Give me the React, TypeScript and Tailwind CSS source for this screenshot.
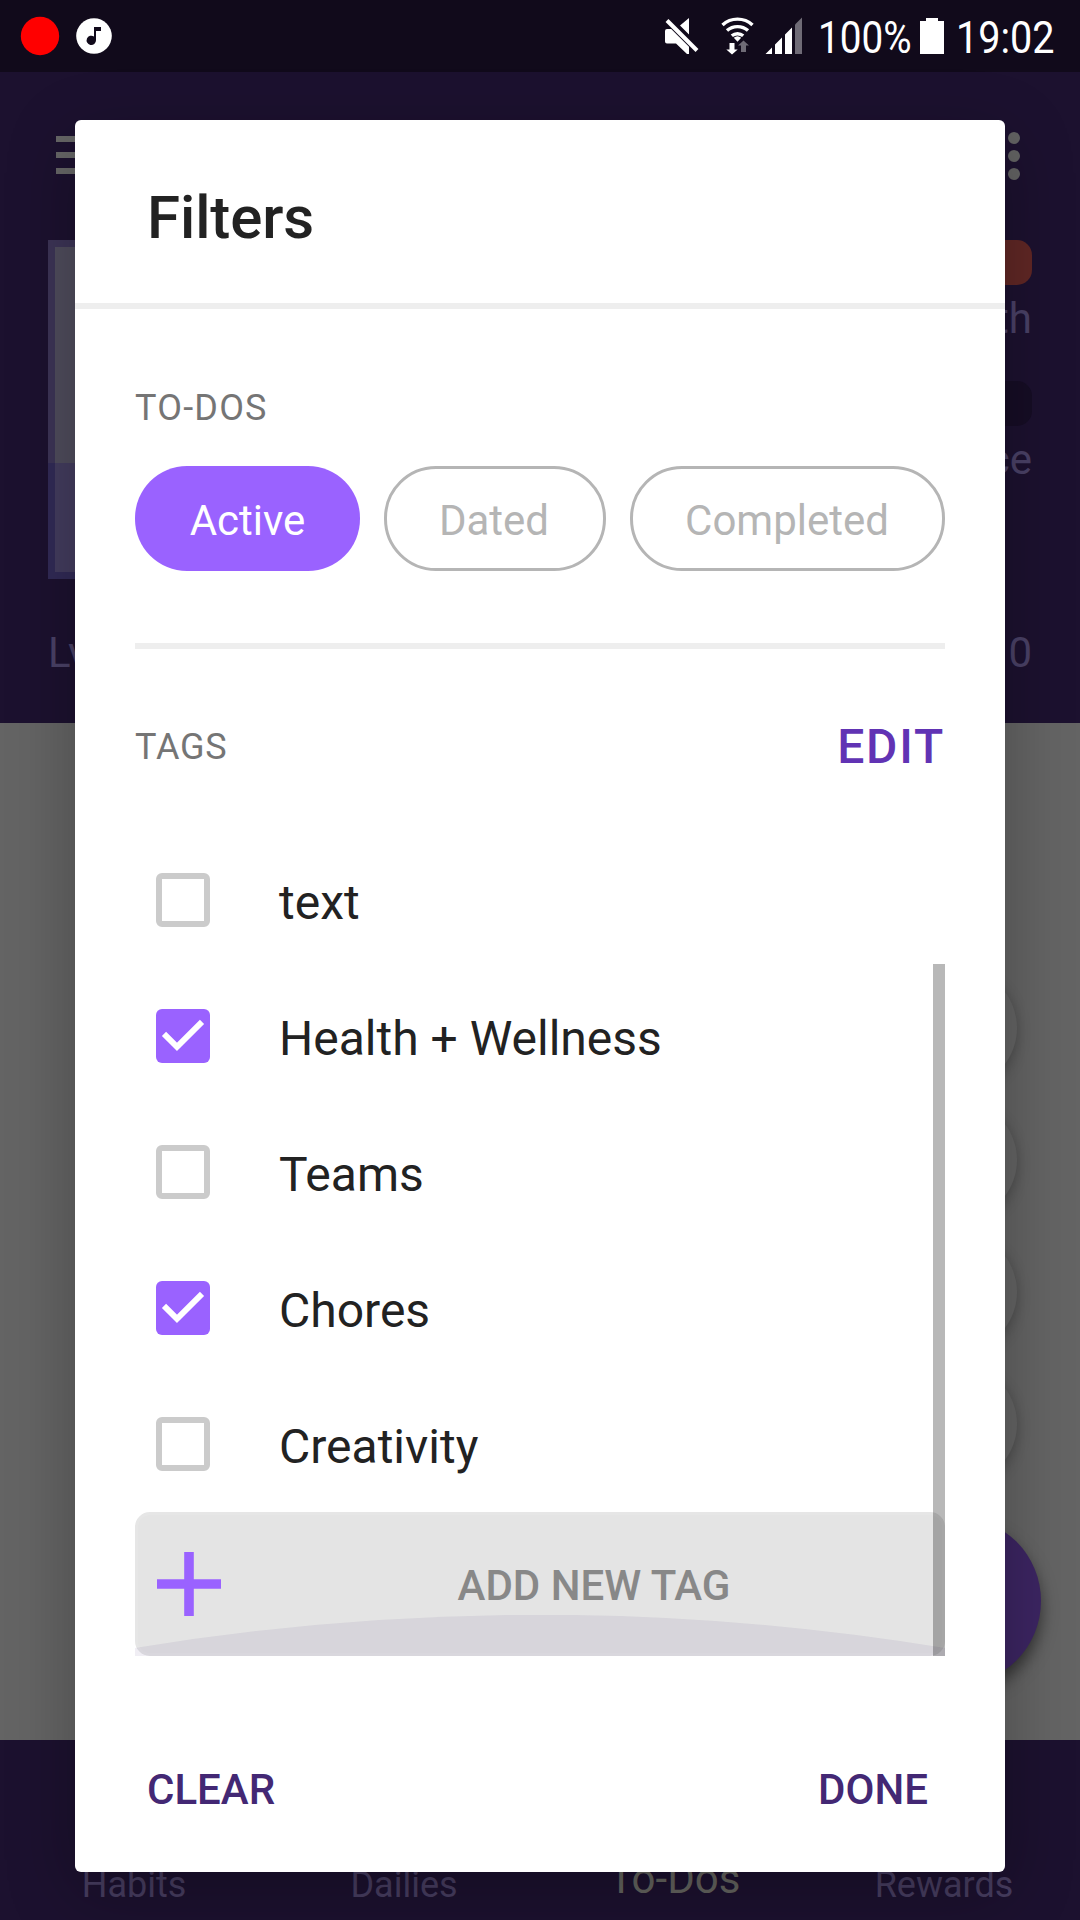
import React from "react";

function StatusBar() {
  return (
    <div className="flex h-[72px] items-center bg-[#110a1b] text-white">
      <svg className="h-[72px] w-[120px]" viewBox="0 0 120 72">
        <circle cx="40" cy="36" r="19.2" fill="#ff0000" />
        <circle cx="94" cy="36" r="17.8" fill="#fff" />
        <path d="M94 27h7v4h-5v9.300a4.700 4.700 0 1 1-2-3.800z" fill="#110a1b" />
      </svg>
      <svg className="ml-auto h-[72px] w-[150px]" viewBox="660 0 150 72" fill="#fff">
        <path d="M689 18v16.500l-9-9zM665 31q0-2 2-2h4.200l17.800 17.800V54h-2l-11-10.500h-9q-2 0-2-2z" />
        <path d="M667 20.500l30 30" stroke="#fff" strokeWidth="4" />
        <g fill="none" stroke="#fff" strokeWidth="3.400">
          <path d="M722.500 25a22 22 0 0 1 30 0" />
          <path d="M727 30.600a15.800 15.800 0 0 1 21 0" />
          <path d="M731.800 35.800a8.800 8.800 0 0 1 11.400 0" />
        </g>
        <path d="M733.800 37.800a5.600 5.600 0 0 1 7.400 0l-3.700 4z" />
        <path d="M729.500 43h5v6.500h3.200l-5.700 5-5.700-5h3.200z" />
        <path d="M741 52v-6.500h-3l5.500-5 5.500 5h-3V52z" fill="#6f6b76" />
        <path d="M765.500 54l6.500-6.500V54zM775 44.500l7-7V54h-7zM785 34.500l7-7V54h-7z" />
        <path d="M795 24.500l7-7V54h-7z" fill="#6f6b76" />
      </svg>
      <div className="flex w-[110px] justify-start pt-[3px] pl-[8px]">
        <span className="origin-left scale-x-[0.86] text-[45px] leading-[72px]">100%</span>
      </div>
      <svg className="h-[72px] w-[24px]" viewBox="0 0 24 72" fill="#fff">
        <path d="M6 18h12v3h6v33H0V21h6z" />
      </svg>
      <div className="w-[136px] pt-[3px] pl-[12px]">
        <span className="inline-block origin-left scale-x-[0.88] text-[45px] leading-[72px]">19:02</span>
      </div>
    </div>
  );
}

function AppHeader() {
  return (
    <div className="h-[651px] bg-[#1c112f] text-[42px] text-[#4a4166]">
      <div className="flex h-[168px] items-start justify-between pr-[60px] pl-[56px]">
        <div className="flex w-[54px] flex-col gap-[10px] pt-[64px]">
          <div className="h-[6px] bg-[#666666]" />
          <div className="h-[6px] bg-[#666666]" />
          <div className="h-[6px] bg-[#666666]" />
        </div>
        <div className="flex flex-col gap-[6px] pt-[60px]">
          <div className="size-[12px] rounded-full bg-[#636363]" />
          <div className="size-[12px] rounded-full bg-[#636363]" />
          <div className="size-[12px] rounded-full bg-[#636363]" />
        </div>
      </div>
      <div className="flex justify-between px-[48px]">
        <div className="h-[339px] w-[339px]">
          <div className="h-[223px] border-x-[7px] border-t-[7px] border-[#3c3456] bg-[#4f4c5c]" />
          <div className="h-[116px] border-x-[7px] border-b-[7px] border-[#312a56] bg-[#433c5e]" />
        </div>
        <div className="flex w-[600px] flex-col">
          <div className="h-[45px] rounded-[15px] bg-[#602725]" />
          <div className="mt-[8px] h-[88px] text-right leading-[52px]">Health</div>
          <div className="h-[45px] rounded-[15px] bg-[#160d25]" />
          <div className="mt-[8px] text-right leading-[52px]">Experience</div>
        </div>
      </div>
      <div className="mt-[48px] flex justify-between px-[48px] leading-[52px]">
        <span>Lv</span>
        <span>0</span>
      </div>
    </div>
  );
}

const tabs = [
  { label: "Habits", style: "pr-[2px]" },
  { label: "Dailies", style: "pr-[2px]" },
  { label: "To-Dos", style: "-mt-[6px] pr-px text-[42px] text-[#64645f]" },
  { label: "Rewards", style: "pr-[2px]" },
];

function TabBar() {
  return (
    <div className="grid h-[180px] grid-cols-4 bg-[#1c112f] pt-[119px] text-center text-[36px] leading-[52px] text-[#473d60]">
      {tabs.map((t) => (
        <span key={t.label} className={t.style}>
          {t.label}
        </span>
      ))}
    </div>
  );
}

function FloatingButtons() {
  return (
    <div className="absolute top-[968px] left-[873px] flex w-[168px] flex-col items-center gap-[12px]">
      {[0, 1, 2, 3].map((i) => (
        <div key={i} className="size-[120px] rounded-full bg-[#646464] shadow-[0_4px_14px_rgba(0,0,0,0.26)]" />
      ))}
      <div className="mt-[21px] size-[168px] rounded-full bg-[#3c2562] shadow-[0_9px_16px_rgba(0,0,0,0.5)]" />
    </div>
  );
}

const tags = [
  { name: "text", on: false },
  { name: "Health + Wellness", on: true },
  { name: "Teams", on: false },
  { name: "Chores", on: true },
  { name: "Creativity", on: false },
];

function TagRow({ name, on }: { name: string; on: boolean }) {
  return (
    <div className="flex h-[136px] items-center pl-[21px]">
      {on ? (
        <svg className="size-[54px]" viewBox="0 0 54 54">
          <rect width="54" height="54" rx="6" fill="#9a62ff" />
          <path d="M8 24.800l13 13 25-25" fill="none" stroke="#fff" strokeWidth="5.900" />
        </svg>
      ) : (
        <div className="size-[54px] rounded-[6px] border-[6px] border-[#cbcbcb]" />
      )}
      <span className="ml-[69px] pt-[5px] text-[48px] leading-[60px] text-[#222222]">{name}</span>
    </div>
  );
}

function FilterDialog() {
  return (
    <div className="absolute top-[120px] left-[75px] flex h-[1752px] w-[930px] flex-col rounded-[6px] bg-white shadow-[0_20px_68px_rgba(0,0,0,0.27)]">
      <div className="h-[189px] border-b-[6px] border-[#eeeeee] pt-[67px] pl-[72px] text-[60px] leading-[61px] font-medium tracking-[-0.1px] text-[#222222]">
        Filters
      </div>
      <div className="px-[60px]">
        <div className="mt-[78px] text-[36px] leading-[42px] tracking-[1.2px] text-[#757575]">TO-DOS</div>
        <div className="mt-[37px] flex gap-[24px] text-center text-[42px] leading-[110px]">
          <div className="h-[105px] w-[225px] rounded-[52px] bg-[#9a62ff] text-white">Active</div>
          <div className="h-[105px] w-[222px] rounded-[52px] border-[3px] border-[#b5b5b5] pr-[2px] leading-[104px] text-[#b5b5b5]">
            Dated
          </div>
          <div className="h-[105px] w-[315px] rounded-[52px] border-[3px] border-[#b5b5b5] pr-px leading-[104px] text-[#b5b5b5]">
            Completed
          </div>
        </div>
        <div className="mt-[72px] h-[6px] bg-[#eeeeee]" />
        <div className="mt-[68px] flex justify-between leading-[60px]">
          <span className="text-[36px] tracking-[0.8px] text-[#757575]">TAGS</span>
          <span className="text-[48px] font-medium tracking-[1.8px] text-[#6133b4]">EDIT</span>
        </div>
        <div className="relative mt-[55px]">
          {tags.map((t) => (
            <TagRow key={t.name} name={t.name} on={t.on} />
          ))}
          <div className="flex h-[144px] items-center rounded-[15px] border-[3px] border-[#e6e6e6] bg-[#e4e4e4] pl-[19px]">
            <svg className="size-[64px] shrink-0" viewBox="0 0 64 64">
              <path d="M0 32h64M32 0v64" stroke="#9a62ff" strokeWidth="9.600" />
            </svg>
            <span className="ml-[25px] flex-1 pt-[4px] text-center text-[42px] leading-[52px] font-medium text-[#888888]">
              ADD NEW TAG
            </span>
          </div>
          <svg className="absolute bottom-0 left-0 h-[41px] w-[810px]" viewBox="0 0 810 41">
            <path d="M0 33A2502 2502 0 0 1 810 33V41H0z" fill="#432874" fillOpacity="0.078" />
          </svg>
          <div className="absolute right-0 bottom-0 h-[692px] w-[12px] bg-black/28" />
        </div>
      </div>
      <div className="flex justify-between pt-[108px] pr-[77px] pl-[72px] text-[42px] leading-[52px] font-medium text-[#432874]">
        <span>CLEAR</span>
        <span>DONE</span>
      </div>
    </div>
  );
}

export default function App() {
  return (
    <div className="relative flex h-[1920px] w-[1080px] flex-col overflow-hidden bg-[#646464] font-[Roboto,sans-serif]">
      <StatusBar />
      <AppHeader />
      <div className="flex-1" />
      <TabBar />
      <FloatingButtons />
      <FilterDialog />
    </div>
  );
}
